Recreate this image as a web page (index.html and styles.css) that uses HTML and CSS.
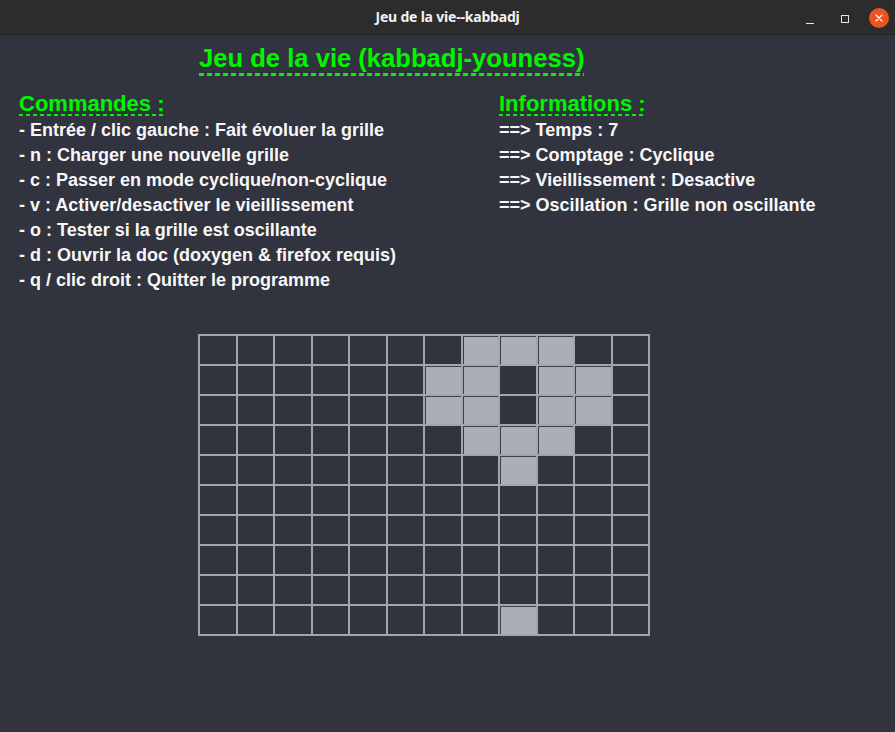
FILE: index.html
```html
<!DOCTYPE html>
<html lang="fr">
<head>
<meta charset="utf-8">
<title>Jeu de la vie--kabbadj</title>
<link rel="stylesheet" href="styles.css">
</head>
<body>
<div class="window">
  <header class="titlebar">
    <span class="titlebar-title">Jeu de la vie--kabbadj</span>
    <div class="titlebar-controls">
      <span class="ctl ctl-min"></span>
      <span class="ctl ctl-max"></span>
      <span class="ctl ctl-close">
        <svg width="20" height="20" viewBox="0 0 20 20"><path d="M7 7 L13 13 M13 7 L7 13" stroke="#fff" stroke-width="1.2" stroke-linecap="round"/></svg>
      </span>
    </div>
  </header>
  <main class="content">
    <h1 class="title">Jeu de la vie (kabbadj-youness)</h1>
    <div class="columns">
      <section class="col">
        <h2 class="heading">Commandes :</h2>
        <ul class="lines">
          <li>- Entrée / clic gauche : Fait évoluer la grille</li>
          <li>- n : Charger une nouvelle grille</li>
          <li>- c : Passer en mode cyclique/non-cyclique</li>
          <li>- v : Activer/desactiver le vieillissement</li>
          <li>- o : Tester si la grille est oscillante</li>
          <li>- d : Ouvrir la doc (doxygen &amp; firefox requis)</li>
          <li>- q / clic droit : Quitter le programme</li>
        </ul>
      </section>
      <section class="col col-info">
        <h2 class="heading">Informations :</h2>
        <ul class="lines">
          <li>==&gt; Temps : 7</li>
          <li>==&gt; Comptage : Cyclique</li>
          <li>==&gt; Vieillissement : Desactive</li>
          <li>==&gt; Oscillation : Grille non oscillante</li>
        </ul>
      </section>
    </div>
    <div class="grid" id="grid">
      <div class="cell"></div><div class="cell"></div><div class="cell"></div><div class="cell"></div><div class="cell"></div><div class="cell"></div><div class="cell"></div><div class="cell alive"></div><div class="cell alive"></div><div class="cell alive"></div><div class="cell"></div><div class="cell"></div>
      <div class="cell"></div><div class="cell"></div><div class="cell"></div><div class="cell"></div><div class="cell"></div><div class="cell"></div><div class="cell alive"></div><div class="cell alive"></div><div class="cell"></div><div class="cell alive"></div><div class="cell alive"></div><div class="cell"></div>
      <div class="cell"></div><div class="cell"></div><div class="cell"></div><div class="cell"></div><div class="cell"></div><div class="cell"></div><div class="cell alive"></div><div class="cell alive"></div><div class="cell"></div><div class="cell alive"></div><div class="cell alive"></div><div class="cell"></div>
      <div class="cell"></div><div class="cell"></div><div class="cell"></div><div class="cell"></div><div class="cell"></div><div class="cell"></div><div class="cell"></div><div class="cell alive"></div><div class="cell alive"></div><div class="cell alive"></div><div class="cell"></div><div class="cell"></div>
      <div class="cell"></div><div class="cell"></div><div class="cell"></div><div class="cell"></div><div class="cell"></div><div class="cell"></div><div class="cell"></div><div class="cell"></div><div class="cell alive"></div><div class="cell"></div><div class="cell"></div><div class="cell"></div>
      <div class="cell"></div><div class="cell"></div><div class="cell"></div><div class="cell"></div><div class="cell"></div><div class="cell"></div><div class="cell"></div><div class="cell"></div><div class="cell"></div><div class="cell"></div><div class="cell"></div><div class="cell"></div>
      <div class="cell"></div><div class="cell"></div><div class="cell"></div><div class="cell"></div><div class="cell"></div><div class="cell"></div><div class="cell"></div><div class="cell"></div><div class="cell"></div><div class="cell"></div><div class="cell"></div><div class="cell"></div>
      <div class="cell"></div><div class="cell"></div><div class="cell"></div><div class="cell"></div><div class="cell"></div><div class="cell"></div><div class="cell"></div><div class="cell"></div><div class="cell"></div><div class="cell"></div><div class="cell"></div><div class="cell"></div>
      <div class="cell"></div><div class="cell"></div><div class="cell"></div><div class="cell"></div><div class="cell"></div><div class="cell"></div><div class="cell"></div><div class="cell"></div><div class="cell"></div><div class="cell"></div><div class="cell"></div><div class="cell"></div>
      <div class="cell"></div><div class="cell"></div><div class="cell"></div><div class="cell"></div><div class="cell"></div><div class="cell"></div><div class="cell"></div><div class="cell"></div><div class="cell alive"></div><div class="cell"></div><div class="cell"></div><div class="cell"></div>
    </div>
  </main>
</div>
</body>
</html>
```
FILE: styles.css
```css
* { box-sizing: border-box; }
html, body { margin: 0; padding: 0; }
body {
  background: #31333f;
  font-family: "Liberation Sans", Arial, sans-serif;
  width: 895px;
  height: 732px;
  overflow: hidden;
}
.window {
  display: flex;
  flex-direction: column;
  height: 732px;
}
.titlebar {
  height: 35px;
  background: #2c2c2c;
  border-bottom: 1px solid #262626;
  display: flex;
  align-items: center;
  justify-content: center;
  position: relative;
  flex: none;
}
.titlebar-title {
  color: #f2f2f2;
  font-family: "Noto Sans", "DejaVu Sans", sans-serif;
  font-weight: 700;
  font-size: 14px;
  letter-spacing: -0.2px;
  margin-top: -1px;
}
.titlebar-controls {
  position: absolute;
  right: 6px;
  top: 8px;
  display: flex;
  align-items: center;
}
.ctl { display: block; }
.ctl-min {
  width: 8px;
  height: 1.5px;
  background: #e6e6e6;
  margin-top: 11px;
  margin-right: 27px;
}
.ctl-max {
  width: 8px;
  height: 8px;
  border: 1.3px solid #e6e6e6;
  margin-top: 1px;
  margin-right: 20px;
}
.ctl-close {
  width: 20px;
  height: 20px;
  border-radius: 50%;
  background: #e95420;
  display: flex;
}
.content {
  padding-top: 7.5px;
  color: #f5f5f5;
}
.title {
  margin: 0 0 0 199px;
  display: inline-block;
  font-size: 25.6px;
  line-height: 30px;
  font-weight: 700;
  color: #00f500;
  padding-bottom: 3px;
  background-image: repeating-linear-gradient(to right, #00f500 0 5px, transparent 5px 8px);
  background-size: 100% 3px;
  background-position: left bottom;
  background-repeat: no-repeat;
}
.columns {
  display: flex;
  padding-left: 19px;
  margin-top: 16.3px;
}
.col { width: 480px; flex: none; }
.col-info { width: auto; flex: 1; }
.heading {
  margin: 0;
  display: inline-block;
  font-size: 22px;
  line-height: 24px;
  font-weight: 700;
  color: #00f500;
  background-image: repeating-linear-gradient(to right, #00f500 0 4px, transparent 4px 7px);
  background-size: 100% 2px;
  background-position: left bottom;
  background-repeat: no-repeat;
}
.lines {
  list-style: none;
  margin: 2.5px 0 0 0;
  padding: 0;
  font-size: 18px;
  line-height: 25px;
  font-weight: 700;
  color: #f7f7f7;
}
.grid {
  margin: 41px 0 0 198px;
  width: 452px;
  height: 302px;
  display: grid;
  grid-template-columns: repeat(12, 1fr);
  grid-template-rows: repeat(10, 1fr);
  gap: 2px;
  padding: 2px;
  background: #a0a5af;
}
.cell { background: #31333f; }
.cell.alive {
  background: #a9aeb8;
  box-shadow: inset 1px 1px 0 #3c3f4b;
}
```
